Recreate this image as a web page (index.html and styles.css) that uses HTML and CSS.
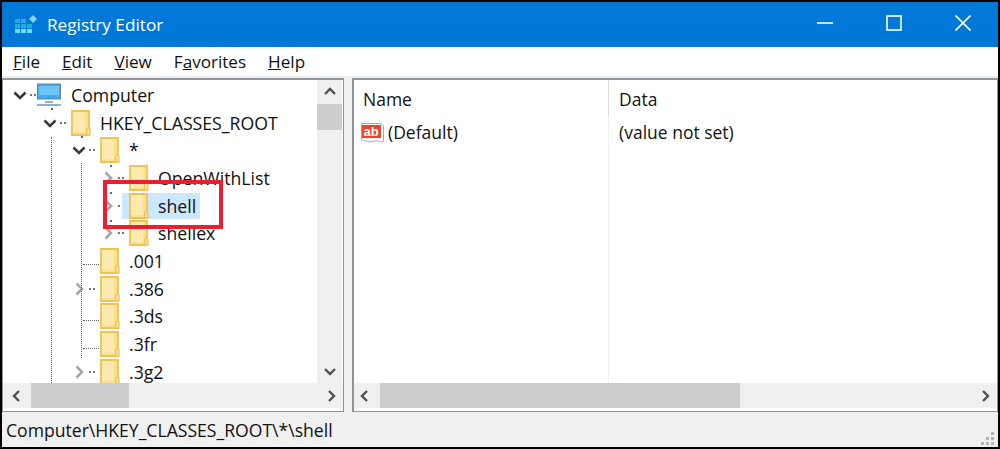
FILE: index.html
```html
<!DOCTYPE html>
<html lang="en">
<head>
<meta charset="utf-8">
<title>Registry Editor</title>
<link rel="stylesheet" href="styles.css">
</head>
<body>
<div class="window">
  <header class="titlebar">
    <svg class="app-icon" viewBox="0 0 24 20" width="24" height="20">
      <g fill="#2fa8dc">
        <rect x="0" y="4" width="5" height="4"/><rect x="6" y="4" width="5" height="4"/>
        <rect x="0" y="9" width="5" height="4"/><rect x="6" y="9" width="5" height="4"/>
      </g>
      <g fill="#0fb7d9"><rect x="12" y="9" width="5" height="4"/></g>
      <g fill="#6fdcf5">
        <rect x="0" y="14" width="5" height="4"/><rect x="6" y="14" width="5" height="4"/><rect x="12" y="14" width="5" height="4"/>
      </g>
      <path d="M18 0l4 4-4 4-4-4z" fill="#7fd6f2"/>
    </svg>
    <span class="title">Registry Editor</span>
    <div class="controls">
      <svg width="16" height="16" viewBox="0 0 16 16"><path d="M0 8h16" stroke="#fff" stroke-width="1.6"/></svg>
      <svg width="16" height="16" viewBox="0 0 16 16"><rect x="1" y="1" width="14" height="14" fill="none" stroke="#fff" stroke-width="1.6"/></svg>
      <svg width="16" height="16" viewBox="0 0 16 16"><path d="M0.5 0.5l15 15M15.500 0.5l-15 15" stroke="#fff" stroke-width="1.6"/></svg>
    </div>
  </header>
  <nav class="menubar">
    <span><u>F</u>ile</span>
    <span><u>E</u>dit</span>
    <span><u>V</u>iew</span>
    <span>F<u>a</u>vorites</span>
    <span><u>H</u>elp</span>
  </nav>
  <main class="panes">
    <section class="pane tree-pane">
      <div class="pane-body">
        <div class="tree">
          <i class="vline v1"></i><i class="vline v2"></i>
          <i class="tick t1"></i><i class="tick t2"></i><i class="tick t3"></i><i class="tick t4"></i><i class="tick t5"></i>
          <div class="row l0">
            <svg class="chev" viewBox="0 0 14 14"><path d="M1.500 4.500l5.500 5.500 5.500-5.500" class="dark"/></svg><i class="dots"></i>
            <svg class="pc" viewBox="0 0 26 24" width="26" height="24"><rect x="1.500" y="1" width="23" height="15" fill="#3fa9ee" stroke="#6b8496"/><rect x="3" y="3" width="20" height="9" fill="#6ec6f6"/><path d="M9 18h8v2H9z" fill="#9ab4c6"/><rect x="1" y="21" width="24" height="2" fill="#8fb0c8"/></svg>
            <span class="label pc-label">Computer</span>
          </div>
          <div class="row l1">
            <svg class="chev" viewBox="0 0 14 14"><path d="M1.500 4.500l5.500 5.500 5.500-5.500" class="dark"/></svg><i class="dots"></i>
            <svg class="folder" viewBox="0 0 20 26"><use href="#f"/></svg>
            <span class="label">HKEY_CLASSES_ROOT</span>
          </div>
          <div class="row l2">
            <svg class="chev" viewBox="0 0 14 14"><path d="M1.500 4.500l5.500 5.500 5.500-5.500" class="dark"/></svg><i class="dots"></i>
            <svg class="folder" viewBox="0 0 20 26"><use href="#f"/></svg>
            <span class="label">*</span>
          </div>
          <div class="row l3">
            <svg class="chev" viewBox="0 0 14 14"><path d="M4.500 1.500l5.500 5.500-5.500 5.500" class="light"/></svg><i class="dots"></i>
            <svg class="folder" viewBox="0 0 20 26"><use href="#f"/></svg>
            <span class="label">OpenWithList</span>
          </div>
          <div class="row l3">
            <svg class="chev" viewBox="0 0 14 14"><path d="M4.500 1.500l5.500 5.500-5.500 5.500" class="light"/></svg><i class="dots"></i>
            <div class="selected">
              <svg class="folder" viewBox="0 0 20 26"><use href="#f"/></svg>
              <span class="label">shell</span>
            </div>
          </div>
          <div class="row l3">
            <svg class="chev" viewBox="0 0 14 14"><path d="M4.500 1.500l5.500 5.500-5.500 5.500" class="light"/></svg><i class="dots"></i>
            <svg class="folder" viewBox="0 0 20 26"><use href="#f"/></svg>
            <span class="label">shellex</span>
          </div>
          <div class="row l2">
            <span class="chev"></span><i class="hdots"></i>
            <svg class="folder" viewBox="0 0 20 26"><use href="#f"/></svg>
            <span class="label">.001</span>
          </div>
          <div class="row l2">
            <svg class="chev" viewBox="0 0 14 14"><path d="M4.500 1.500l5.500 5.500-5.500 5.500" class="light"/></svg><i class="dots"></i>
            <svg class="folder" viewBox="0 0 20 26"><use href="#f"/></svg>
            <span class="label">.386</span>
          </div>
          <div class="row l2">
            <span class="chev"></span><i class="hdots"></i>
            <svg class="folder" viewBox="0 0 20 26"><use href="#f"/></svg>
            <span class="label">.3ds</span>
          </div>
          <div class="row l2">
            <span class="chev"></span><i class="hdots"></i>
            <svg class="folder" viewBox="0 0 20 26"><use href="#f"/></svg>
            <span class="label">.3fr</span>
          </div>
          <div class="row l2">
            <svg class="chev" viewBox="0 0 14 14"><path d="M4.500 1.500l5.500 5.500-5.500 5.500" class="light"/></svg><i class="dots"></i>
            <svg class="folder" viewBox="0 0 20 26"><use href="#f"/></svg>
            <span class="label">.3g2</span>
          </div>
        </div>
        <div class="vbar">
          <svg class="arrow" viewBox="0 0 14 14"><path d="M2 9l5-5 5 5" class="sb"/></svg>
          <div class="vthumb"></div>
          <div class="spacer"></div>
          <svg class="arrow" viewBox="0 0 14 14"><path d="M2 5l5 5 5-5" class="sb"/></svg>
        </div>
      </div>
      <div class="hbar tree-hbar">
        <svg class="arrow" viewBox="0 0 14 14"><path d="M9 2L4 7l5 5" class="sb"/></svg>
        <div class="hthumb tree-thumb"></div>
        <div class="spacer"></div>
        <svg class="arrow" viewBox="0 0 14 14"><path d="M5 2l5 5-5 5" class="sb"/></svg>
      </div>
    </section>
    <div class="splitter"></div>
    <section class="pane list-pane">
      <div class="list">
        <div class="col col-name">
          <div class="head">Name</div>
          <div class="cell">
            <svg class="ab" viewBox="0 0 25 24" width="25" height="24">
              <path d="M1.500 3.500H17l4 0 2.500 3V21c-3 2-5-1-9 0s-6 1-9 0-3-.5-4-1z" fill="#fff" stroke="#a8a8a8"/>
              <rect x="2" y="5" width="19" height="13" fill="#e8462c"/>
              <text x="3.500" y="16" class="ab-text">ab</text>
            </svg>
            <span>(Default)</span>
          </div>
        </div>
        <div class="col col-data">
          <div class="head">Data</div>
          <div class="cell">(value not set)</div>
        </div>
      </div>
      <div class="hbar list-hbar">
        <svg class="arrow" viewBox="0 0 14 14"><path d="M9 2L4 7l5 5" class="sb"/></svg>
        <div class="hthumb list-thumb"></div>
        <div class="spacer"></div>
        <svg class="arrow" viewBox="0 0 14 14"><path d="M5 2l5 5-5 5" class="sb"/></svg>
      </div>
    </section>
  </main>
  <footer class="status">
    <span>Computer\HKEY_CLASSES_ROOT\*\shell</span>
    <svg class="grip" width="14" height="14" viewBox="0 0 14 14" fill="#b4b4b4"><rect x="10" y="1" width="3" height="3"/><rect x="5" y="6" width="3" height="3"/><rect x="10" y="6" width="3" height="3"/><rect x="0" y="11" width="3" height="3"/><rect x="5" y="11" width="3" height="3"/><rect x="10" y="11" width="3" height="3"/></svg>
  </footer>
  <div class="callout"></div>
</div>
<svg class="defs" width="0" height="0">
  <defs>
    <g id="f">
      <path d="M1 1h17v24H1z" fill="#fce08f" stroke="#efc254" stroke-width="1.800"/>
      <rect x="2" y="2" width="12" height="20" fill="#fee9ae"/>
      <path d="M15.500 25v-6l2-1.500 1.500 1V25z" fill="#fce08f" stroke="#efc254" stroke-width="1.200"/>
    </g>
  </defs>
</svg>
</body>
</html>
```

FILE: styles.css
```css
* { box-sizing: border-box; }
html, body { margin: 0; height: 100%; }
body { background: #000; font-family: "Open Sans", "Noto Sans", sans-serif; color: #111; overflow: hidden; }
.defs { display: block; height: 0; }
.window { position: relative; margin: 2px 2px 0 2px; height: 445px; background: #f0f0f0; display: flex; flex-direction: column; font-size: 17.5px; }

.titlebar { height: 45px; background: #0078d7; color: #fff; display: flex; align-items: center; padding-left: 13px; flex: none; }
.app-icon { margin-right: 8px; }
.title { font-size: 17.2px; }
.controls { margin-left: auto; display: flex; gap: 53px; padding-right: 27px; padding-bottom: 3px; align-items: center; }

.menubar { height: 29px; background: #fff; display: flex; align-items: center; padding-left: 11px; gap: 22px; flex: none; font-size: 17.1px; }

.panes { flex: 1; display: flex; padding-top: 2px; min-height: 0; }
.pane { border: 2px solid #8f939b; border-right-width: 1px; border-bottom-width: 1px; background: #fff; display: flex; flex-direction: column; }
.tree-pane { width: 342px; border-left-width: 1px; }
.splitter { width: 8px; }
.list-pane { flex: 1; }

.pane-body { flex: 1; min-height: 0; display: flex; }
.tree { position: relative; flex: 1; overflow: hidden; padding-top: 1px; font-size: 17.7px; }
.row { height: 27.7px; display: flex; align-items: center; white-space: nowrap; }
.l0 { padding-left: 10px; }
.l1 { padding-left: 40px; }
.l2 { padding-left: 69px; }
.l3 { padding-left: 98px; }
.chev { width: 14px; height: 14px; flex: none; }
.chev path { fill: none; stroke-width: 2.6; }
.dark { stroke: #3a3a3a; }
.light { stroke: #a6a6a6; }
.dots { width: 6px; margin: 0 5px 0 3px; height: 0; border-top: 2px dotted #777; flex: none; }
.hdots { width: 16px; margin-left: -3px; margin-right: 1px; height: 0; border-top: 1px dotted #666; flex: none; transform: translateY(4px); }
.pc { flex: none; margin-left: -5px; }
.folder { width: 20px; height: 26px; flex: none; }
.label { margin-left: 9px; }
.selected { display: flex; align-items: center; background: #cce8ff; width: 78px; margin-left: -7px; padding-left: 7px; }
.vline { position: absolute; top: 57px; bottom: 0; left: 48px; border-left: 1px dotted #666; }
.v2 { top: 83px; bottom: 25px; left: 78px; }
.tick { position: absolute; width: 2px; height: 2px; background: #666; }
.t1 { left: 48px; top: 28px; }
.t2 { left: 78px; top: 56px; }
.t3 { left: 107px; top: 85px; }
.t4 { left: 107px; top: 112px; }
.t5 { left: 107px; top: 140px; }

.vbar { width: 25px; background: #f0f0f0; display: flex; flex-direction: column; flex: none; margin-right: 1px; }
.vbar .arrow { margin: 5px auto; }
.vthumb { height: 26px; background: #cdcdcd; flex: none; }
.hbar { height: 25px; background: #f0f0f0; display: flex; align-items: center; flex: none; margin-bottom: 3px; }
.arrow { width: 14px; height: 14px; flex: none; }
.hbar .arrow { margin: 0 5px 0 7px; }
.tree-hbar > .arrow:first-child { margin: 0 7px 0 7px; }
.list-hbar > .arrow:first-child { margin: 0 8px 0 4px; }
.sb { fill: none; stroke: #505050; stroke-width: 2.4; }
.hthumb { height: 100%; background: #cdcdcd; flex: none; }
.tree-thumb { width: 98px; }
.list-thumb { width: 360px; }
.spacer { flex: 1; }

.list { flex: 1; display: flex; min-height: 0; }
.col { display: flex; flex-direction: column; }
.col-name { width: 255px; border-right: 1px solid #eef1f5; }
.head { height: 38px; padding-left: 9px; display: flex; align-items: center; }
.col-name .head { border-right: 1px solid #dcdcdc; margin-right: -1px; }
.cell { height: 28px; padding-left: 9px; display: flex; align-items: center; }
.col-name .cell { padding-left: 6px; }
.col-data .head, .col-data .cell { padding-left: 10px; }
.ab { flex: none; margin-right: 3px; }
.ab-text { font: bold 13px "Liberation Sans", sans-serif; fill: #fff; }

.status { height: 35px; display: flex; align-items: center; justify-content: space-between; padding: 0 3px 0 4px; flex: none; font-size: 17.6px; }
.grip { align-self: flex-end; margin-bottom: 2px; }

.callout { position: absolute; left: 101px; top: 178px; width: 120px; height: 49px; border: 4px solid #ee1c2e; }
```
